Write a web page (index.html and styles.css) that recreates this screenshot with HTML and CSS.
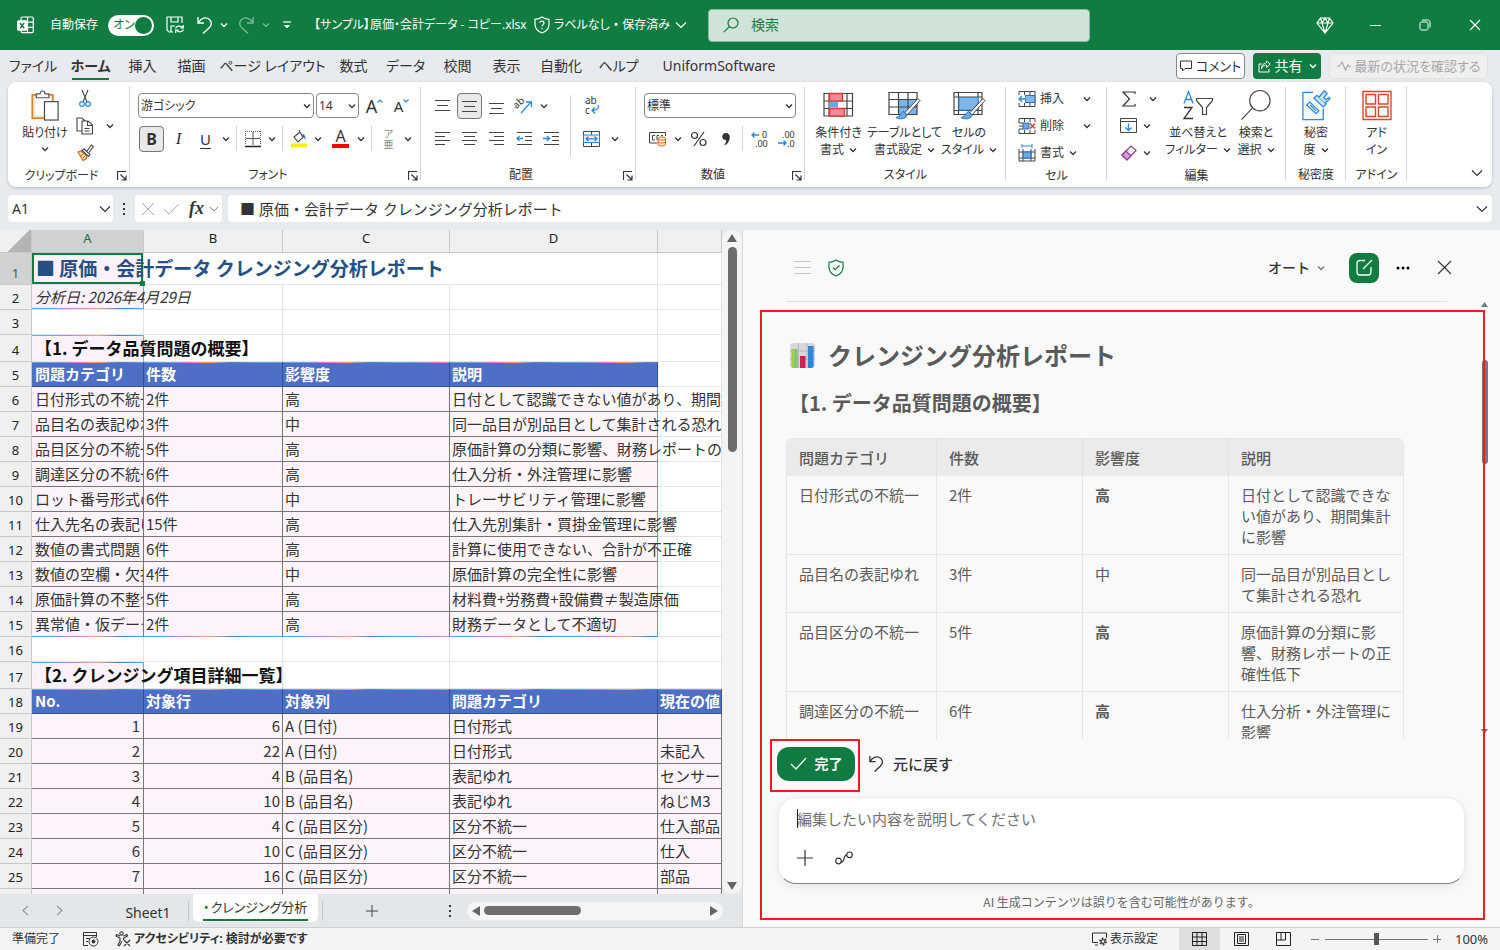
FILE: index.html
```html
<!DOCTYPE html>
<html lang="ja">
<head>
<meta charset="utf-8">
<title>原価・会計データ - Excel</title>
<link rel="stylesheet" href="styles.css">
</head>
<body>
<svg class="defs" aria-hidden="true">
  <symbol id="chev" viewBox="0 0 8 8"><path d="M1 2.500l3 3 3-3" fill="none" stroke="currentColor" stroke-width="1.300"/></symbol>
  <symbol id="chev-big" viewBox="0 0 12 8"><path d="M1 1.500l5 5 5-5" fill="none" stroke="currentColor" stroke-width="1.200"/></symbol>
  <symbol id="launch" viewBox="0 0 10 10"><path d="M.5 9V.5H9M3.500 3.500l5 5M9 4.500V9H4.500" fill="none" stroke="#333" stroke-width="1.200"/></symbol>
  <symbol id="undo" viewBox="0 0 16 18"><path d="M1 1v6h6M1.500 6.500C4 2 9 .5 12.500 3.500c3 3 2 6-.5 8.500L6 17.500" fill="none" stroke="currentColor" stroke-width="1.400"/></symbol>
</svg>

<header class="titlebar">
  <div class="title-left">
    <svg class="app-icon" width="17" height="18" viewBox="0 0 17 18" fill="none" stroke="#fff" stroke-width="1.200"><path d="M4 4V2.500C4 1.500 4.500 1 5.500 1H15c.8 0 1.300.5 1.300 1.300v13c0 .8-.5 1.300-1.300 1.300H5.500C4.500 16.600 4 16 4 15M10.500 1v15.600M4 6.200h12M10 11.400h6"/><rect x=".6" y="4.800" width="9" height="9.400" rx="1" fill="#fff"/><path d="M3 7l4.200 5.200M7.200 7L3 12.200" stroke="#107c41" stroke-width="1.400"/></svg>
    <span class="autosave">自動保存</span>
    <button class="toggle" role="switch" aria-checked="true">オン<i></i></button>
    <button class="tb save" aria-label="保存"><svg width="19" height="18" viewBox="0 0 19 18" fill="none" stroke="#fff" stroke-width="1.200"><path d="M7 16H3L1 14V1h15v6M5 1v5h7V1M5 16v-6h4"/><path d="M9.500 12.500c.5-2.500 5-3.500 7.500-.8M17.300 9v3h-3M17.500 13.500c-.8 2.500-5 3.300-7.300.7M9.700 17v-3h3"/></svg></button>
    <button class="tb" aria-label="元に戻す"><svg width="16" height="18"><use href="#undo"/></svg></button>
    <button class="tb drop" aria-label="元に戻す履歴"><svg width="8" height="8"><use href="#chev"/></svg></button>
    <button class="tb redo dim" aria-label="やり直し"><svg class="flip" width="16" height="18"><use href="#undo"/></svg></button>
    <button class="tb drop dim" aria-label="やり直し履歴"><svg width="8" height="8"><use href="#chev"/></svg></button>
    <button class="tb custom" aria-label="カスタマイズ"><svg width="8" height="9" viewBox="0 0 8 9"><path d="M0 1h8" stroke="#fff" stroke-width="1.200"/><path d="M1.500 4.500L4 7l2.500-2.500z" fill="#fff" stroke="#fff"/></svg></button>
    <span class="filename">【サンプル】原価・会計データ - コピー.xlsx</span>
    <svg width="16" height="18" viewBox="0 0 16 18" fill="none" stroke="#fff" stroke-width="1.200"><path d="M8 1c2 1.500 4 2.200 7 2.300v5c0 4-2.500 7-7 8.700-4.500-1.700-7-4.700-7-8.700v-5C4 3.200 6 2.500 8 1z"/><path d="M5.800 6.800C6 4.500 10 4.500 10 7c0 1.500-2 1.700-2 3.500M8 12v1.300"/></svg>
    <span class="label">ラベルなし</span><span class="label">•</span><span class="label">保存済み</span>
    <svg width="12" height="8"><use href="#chev-big"/></svg>
  </div>
  <label class="search"><svg width="16" height="16" viewBox="0 0 16 16" fill="none" stroke="#1c7a45" stroke-width="1.200"><circle cx="10" cy="6" r="5"/><path d="M6.500 9.500L.8 15.200"/></svg><input type="search" placeholder="検索" aria-label="検索"></label>
  <div class="window-buttons">
    <button aria-label="プレミアム"><svg width="18" height="17" viewBox="0 0 18 17" fill="none" stroke="#fff" stroke-width="1.200"><path d="M4.500 1h9L17 6l-8 10L1 6zM1 6h16M6 6l3 10 3-10M4.500 1L6 6l3-5 3 5 1.500-5"/></svg></button>
    <button aria-label="最小化"><svg width="11" height="11"><path d="M0 5.500h11" stroke="#fff"/></svg></button>
    <button aria-label="元のサイズ"><svg width="12" height="12" viewBox="0 0 12 12" fill="none" stroke="#fff"><rect x="1" y="3" width="8" height="8" rx="1.500"/><path d="M3 1h5.500C10.500 1 11 2 11 3v5.500"/></svg></button>
    <button aria-label="閉じる"><svg width="12" height="12"><path d="M1 1l10 10M11 1L1 11" stroke="#fff" stroke-width="1.200"/></svg></button>
  </div>
</header>

<nav class="tabs">
  <button class="t60">ファイル</button><button class="t55 active"><b>ホーム</b></button><button class="t49">挿入</button><button class="t49">描画</button><button class="t114">ページ レイアウト</button><button class="t49">数式</button><button class="t55">データ</button><button class="t49">校閲</button><button class="t49">表示</button><button class="t60">自動化</button><button class="t55">ヘルプ</button><button class="t146">UniformSoftware</button>
  <div class="tab-actions">
    <button class="comment"><svg width="12" height="12" viewBox="0 0 12 12" fill="none" stroke="#333"><path d="M.5 1h11v7.500H5L2.500 11V8.500h-2z"/></svg>コメント</button>
    <button class="share"><svg width="13" height="13" viewBox="0 0 13 13" fill="none" stroke="#fff"><path d="M4 4H1v8h10V9M3.500 9c.5-3 2.500-4 5-4V7.500L12.300 4 8.500 1v2C6 3 3.500 5 3.500 9z"/></svg>共有<svg width="8" height="8"><use href="#chev"/></svg></button>
    <button class="catchup" disabled><svg width="14" height="10" viewBox="0 0 14 10" fill="none" stroke="#aaa" stroke-width="1.200"><path d="M0 5h2.500L5 1l3.500 8L11 4l1 1.500h2"/></svg>最新の状況を確認する</button>
  </div>
</nav>

<section class="ribbon">
  <div class="group g-clip">
    <div class="body">
      <button class="big paste"><svg width="30" height="32" viewBox="0 0 30 32" fill="none"><path d="M7 5H2v24h12M18 5h5v6" stroke="#d9822b" stroke-width="2"/><path d="M4 7v20h10M4 7h16" stroke="#fbe3c4" stroke-width="1.500"/><path d="M6 8V4h4c0-4 5-4 5 0h4v4z" fill="#fff" stroke="#555" stroke-width="1.200"/><rect x="14.500" y="12" width="14" height="19" fill="#fff" stroke="#444" stroke-width="1.200"/></svg>貼り付け<svg width="8" height="8"><use href="#chev"/></svg></button>
      <div class="stack">
        <div class="row"><button class="ib" aria-label="切り取り"><svg width="12" height="18" viewBox="0 0 12 18" fill="none"><path d="M3 0l5 12M9 0L4 12" stroke="#444" stroke-width="1.100"/><circle cx="3" cy="14" r="2.300" stroke="#2b88d8" stroke-width="1.200"/><circle cx="9" cy="14" r="2.300" stroke="#2b88d8" stroke-width="1.200"/></svg></button></div>
        <div class="row"><button class="ib" aria-label="コピー"><svg width="18" height="18" viewBox="0 0 18 18" fill="none" stroke="#444" stroke-width="1.100"><path d="M6 14H1V1h5l3 3M6 4h6l4.500 4v9H6zM11.500 4v4.500h5M8.500 11.500h5M8.500 14h5"/></svg></button><svg class="dd" width="8" height="8"><use href="#chev"/></svg></div>
        <div class="row"><button class="ib" aria-label="書式のコピー"><svg width="17" height="17" viewBox="0 0 17 17" fill="none"><path d="M1 8l3-1 6 5-1 3-3 1.500z" fill="#fbd9b5" stroke="#d9641c" stroke-width="1.200"/><path d="M4 12l2-2M6 14l2-2" stroke="#d9641c"/><path d="M5 6.500l2-1.500 6 5.500-1.500 2zM10 7l4.500-6 1.800 1.500L12 8.500" fill="#fff" stroke="#444" stroke-width="1.100"/></svg></button></div>
      </div>
    </div>
    <footer><span>クリップボード</span><svg class="launch" width="10" height="10"><use href="#launch"/></svg></footer>
  </div>

  <div class="group g-font">
    <div class="lines">
      <div class="row">
        <span class="pick font"><select aria-label="フォント"><option>游ゴシック</option></select><svg width="8" height="8"><use href="#chev"/></svg></span>
        <span class="pick size"><select aria-label="サイズ"><option>14</option></select><svg width="8" height="8"><use href="#chev"/></svg></span>
        <button class="ib a-up">A<svg width="6" height="4" viewBox="0 0 6 4"><path d="M.5 3.500L3 1l2.500 2.500" fill="none" stroke="#2b88d8" stroke-width="1.200"/></svg></button>
        <button class="ib a-down">A<svg width="6" height="4" viewBox="0 0 6 4"><path d="M.5.5L3 3 5.500.5" fill="none" stroke="#2b88d8" stroke-width="1.200"/></svg></button>
      </div>
      <div class="row">
        <button class="ib on"><b>B</b></button><button class="ib it">I</button><button class="ib"><u>U</u></button><svg class="dd" width="8" height="8"><use href="#chev"/></svg><i class="vr"></i>
        <button class="ib" aria-label="罫線"><svg width="16" height="16" viewBox="0 0 16 16" fill="none" stroke="#555"><path d="M.5 0v14M15.500 0v14M0 .5h16" stroke-dasharray="1 1"/><path d="M8 1v13M1 7.500h14"/><path d="M0 15.500h16" stroke="#222" stroke-width="1.500"/></svg></button><svg class="dd" width="8" height="8"><use href="#chev"/></svg><i class="vr"></i>
        <button class="ib" aria-label="塗りつぶし"><svg width="18" height="18" viewBox="0 0 18 18" fill="none"><path d="M4 7l6-5 3 5.500-5 4.500zM10 2L9 0" stroke="#444" stroke-width="1.100"/><path d="M12.500 4c2 .5 3 2 3 6-1-2-2-3-3-3z" fill="#2b6cb8"/><path d="M1 15.500h16" stroke="#f2f20c" stroke-width="4"/></svg></button><svg class="dd" width="8" height="8"><use href="#chev"/></svg>
        <button class="ib fc" aria-label="フォントの色">A<svg width="17" height="4"><path d="M0 2h17" stroke="#f00" stroke-width="4"/></svg></button><svg class="dd" width="8" height="8"><use href="#chev"/></svg><i class="vr"></i>
        <button class="ib ruby"><span>ア</span><span>亜</span></button><svg class="dd" width="8" height="8"><use href="#chev"/></svg>
      </div>
    </div>
    <footer><span>フォント</span><svg class="launch" width="10" height="10"><use href="#launch"/></svg></footer>
  </div>

  <div class="group g-align">
    <div class="body">
      <div class="lines">
        <div class="row">
          <button class="ib" aria-label="上揃え"><svg width="15" height="16"><path d="M0 2.500h15M2 7.500h11M0 12.500h15" stroke="#444"/></svg></button>
          <button class="ib on" aria-label="上下中央揃え"><svg width="15" height="16"><path d="M0 3.500h15M2 8.500h11M0 13.500h15" stroke="#444"/></svg></button>
          <button class="ib" aria-label="下揃え"><svg width="15" height="16"><path d="M0 5.500h15M2 10.500h11M0 15.500h15" stroke="#444"/></svg></button>
          <button class="ib" aria-label="方向"><svg width="18" height="18" viewBox="0 0 18 18"><text x="0" y="9" font-size="10" transform="rotate(-40 5 9)" fill="#333">ab</text><path d="M6 16L16 5M11 5h5.500v5" fill="none" stroke="#2b88d8" stroke-width="1.300"/></svg></button>
          <svg class="dd" width="8" height="8"><use href="#chev"/></svg>
        </div>
        <div class="row">
          <button class="ib" aria-label="左揃え"><svg width="15" height="16"><path d="M0 1.500h15M0 5.500h10M0 9.500h15M0 13.500h10" stroke="#444"/></svg></button>
          <button class="ib" aria-label="中央揃え"><svg width="15" height="16"><path d="M0 1.500h15M2 5.500h11M0 9.500h15M2 13.500h11" stroke="#444"/></svg></button>
          <button class="ib" aria-label="右揃え"><svg width="15" height="16"><path d="M0 1.500h15M5 5.500h10M0 9.500h15M5 13.500h10" stroke="#444"/></svg></button>
          <button class="ib" aria-label="インデントを減らす"><svg width="16" height="16" fill="none"><path d="M1 1.500h15M9 5.500h7M9 9.500h7M1 13.500h15" stroke="#444"/><path d="M7 7.500H1M3.500 5L1 7.500 3.500 10" stroke="#2b88d8" stroke-width="1.300"/></svg></button>
          <button class="ib" aria-label="インデントを増やす"><svg width="16" height="16" fill="none"><path d="M1 1.500h15M9 5.500h7M9 9.500h7M1 13.500h15" stroke="#444"/><path d="M0 7.500h6M4 5l2.500 2.500L4 10" stroke="#2b88d8" stroke-width="1.300"/></svg></button>
        </div>
      </div>
      <i class="vr tall"></i>
      <div class="lines">
        <div class="row"><button class="ib" aria-label="折り返し"><svg width="16" height="18" viewBox="0 0 16 18"><text x="1" y="7" font-size="10" fill="#333">ab</text><text x="1" y="17" font-size="10" fill="#333">c</text><path d="M14 8c1.500 3-.5 5.500-6 5.500M11 10.500l-3 3 3 3" fill="none" stroke="#2b88d8" stroke-width="1.300"/></svg></button></div>
        <div class="row"><button class="ib" aria-label="結合"><svg width="17" height="16" fill="none"><path d="M.5.500h16v15H.5zM8.500.5v4M8.500 11.500v4" stroke="#444"/><path d="M.5 4h16v7.500H.5z" fill="#e3f0fb" stroke="#2b88d8"/><path d="M3 7.800h11M5.500 5.500L3 7.800l2.500 2.200M11.500 5.500L14 7.800 11.500 10" stroke="#2b88d8" stroke-width="1.200"/></svg></button><svg class="dd" width="8" height="8"><use href="#chev"/></svg></div>
      </div>
    </div>
    <footer><span>配置</span><svg class="launch" width="10" height="10"><use href="#launch"/></svg></footer>
  </div>

  <div class="group g-num">
    <div class="lines">
      <div class="row"><span class="pick num"><select aria-label="表示形式"><option>標準</option></select><svg width="8" height="8"><use href="#chev"/></svg></span></div>
      <div class="row">
        <button class="ib" aria-label="通貨"><svg width="18" height="16" viewBox="0 0 18 16" fill="none"><path d="M8 12H.5V1.500h16V5M6 4.500H3.500v4.500H6M10 4.500H8V9M12 4.500h2" stroke="#444"/><path d="M9 7.500c0-2 7.500-2 7.500 0v6c0 2-7.500 2-7.500 0zM9 7.500c0 2 7.500 2 7.500 0M9 10.500c0 2 7.500 2 7.500 0" fill="#fde3cc" stroke="#d9641c"/></svg></button><svg class="dd" width="8" height="8"><use href="#chev"/></svg>
        <button class="ib" aria-label="パーセント"><svg width="18" height="16" viewBox="0 0 18 16" fill="none" stroke="#333" stroke-width="1.200"><circle cx="4.500" cy="4.500" r="3"/><circle cx="13" cy="11.500" r="3"/><path d="M14 1L4 15"/></svg></button>
        <button class="ib" aria-label="桁区切り"><svg width="10" height="14" viewBox="0 0 10 14"><path d="M5 1c5 0 5 7 .5 11.500L3 13c2-2 2.500-3.500 2-5C0 8 0 1 5 1z" fill="#333"/></svg></button><i class="vr"></i>
        <button class="ib" aria-label="小数点以下を増やす"><svg width="18" height="18" viewBox="0 0 18 18"><text x="11" y="8" font-size="9" fill="#333">0</text><text x="4" y="17" font-size="9" fill="#333">.00</text><path d="M8 5H1M3.500 2.500L1 5l2.500 2.500" fill="none" stroke="#2b88d8" stroke-width="1.300"/></svg></button>
        <button class="ib" aria-label="小数点以下を減らす"><svg width="18" height="18" viewBox="0 0 18 18"><text x="4" y="8" font-size="9" fill="#333">.00</text><text x="9" y="17" font-size="9" fill="#333">.0</text><path d="M0 13h8M5.500 10.500L8 13l-2.500 2.500" fill="none" stroke="#2b88d8" stroke-width="1.300"/></svg></button>
      </div>
    </div>
    <footer><span>数値</span><svg class="launch" width="10" height="10"><use href="#launch"/></svg></footer>
  </div>

  <div class="group g-style">
    <div class="body">
      <button class="big"><svg width="31" height="28" viewBox="0 0 31 28" fill="none"><path d="M1 2h28.500v22.500H1zM1 9.500h28.500M1 17h28.500M6 2v22.500M24 2v22.500" stroke="#444" stroke-width="1.200"/><path d="M6.500 2h13v7.500h-13zM6.500 17h15v7.500h-15z" fill="#f4899a" stroke="#e23b3b" stroke-width="1.400"/><path d="M6.500 10.200h8.500v6H6.500z" fill="#69a9e6"/></svg>条件付き<span>書式<svg width="8" height="8"><use href="#chev"/></svg></span></button>
      <button class="big"><svg width="33" height="30" viewBox="0 0 33 30" fill="none"><path d="M11 9h18v15H11z" fill="#7db6ea"/><path d="M1 2h28v22H1zM1 9h28M1 16.500h28M10.500 2v22M20 2v22" stroke="#444" stroke-width="1.200"/><path d="M30 8L17 22l2 2.500L32 10z" fill="#fff" stroke="#444"/><path d="M16 21c-4 1-3 5-8 6 4 2 9 2 11-2z" fill="#69a9e6" stroke="#2b6cb8"/></svg>テーブルとして<span>書式設定<svg width="8" height="8"><use href="#chev"/></svg></span></button>
      <button class="big"><svg width="33" height="30" viewBox="0 0 33 30" fill="none"><path d="M1 2h28v22H1zM1 6.500h28M1 20h28M5.500 2v22M25 2v22" stroke="#444" stroke-width="1.200"/><path d="M6 7h19v12.500H6z" fill="#7db6ea" stroke="#2b88d8"/><path d="M30 8L17 22l2 2.500L32 10z" fill="#fff" stroke="#444"/><path d="M16 21c-4 1-3 5-8 6 4 2 9 2 11-2z" fill="#69a9e6" stroke="#2b6cb8"/></svg>セルの<span>スタイル<svg width="8" height="8"><use href="#chev"/></svg></span></button>
    </div>
    <footer><span>スタイル</span></footer>
  </div>

  <div class="group g-cell">
    <div class="stack">
      <button class="line"><svg width="18" height="16" viewBox="0 0 18 16" fill="none"><path d="M1 .5h16v15H1zM1 5h16M1 11h16M6.500.5v15M12 .5v15" stroke="#444"/><path d="M7 4.500h10v7H7z" fill="#7db6ea" stroke="#2b6cb8"/><path d="M0 4h7v8H0z" fill="#fff"/><path d="M8 8H1M4 5L1 8l3 3" stroke="#2b88d8" stroke-width="1.300"/></svg><span>挿入</span><svg width="8" height="8"><use href="#chev"/></svg></button>
      <button class="line"><svg width="18" height="16" viewBox="0 0 18 16" fill="none"><path d="M17 4V.5H1V5h4M17 12v3.500H1V11h4M6.500.5V4M12 .5V4M6.500 12v3.500M12 12v3.500M1 8h4" stroke="#444"/><path d="M5 5h6v6H5z" fill="#69a9e6" stroke="#2b6cb8"/><path d="M12 5.500l5 5M17 5.500l-5 5" stroke="#e23b20" stroke-width="1.500"/></svg><span>削除</span><svg width="8" height="8"><use href="#chev"/></svg></button>
      <button class="line fmt"><svg width="18" height="18" viewBox="0 0 18 18" fill="none"><path d="M4 2h10M4 0v4M14 0v4" stroke="#2b88d8"/><path d="M1 5v12h16V5M1 8h16M1 14h16M5 5v12M13 5v12" stroke="#444"/><path d="M5 8h8v6H5z" fill="#69a9e6" stroke="#2b6cb8"/></svg><span>書式</span><svg width="8" height="8"><use href="#chev"/></svg></button>
    </div>
    <footer><span>セル</span></footer>
  </div>

  <div class="group g-edit">
    <div class="body">
      <div class="stack">
        <div class="row"><button class="ib" aria-label="合計"><svg width="14" height="16" viewBox="0 0 14 16" fill="none" stroke="#333" stroke-width="1.200"><path d="M13 3V1H1l6.500 7L1 15h12v-2"/></svg></button><svg class="dd far" width="8" height="8"><use href="#chev"/></svg></div>
        <div class="row"><button class="ib" aria-label="フィル"><svg width="17" height="15" viewBox="0 0 17 15" fill="none"><path d="M.5.500h16v14H.5zM.5 3.500h16" stroke="#444"/><path d="M8.500 5.500V12M5.500 9.500l3 3 3-3" stroke="#2b88d8" stroke-width="1.300"/></svg></button><svg class="dd" width="8" height="8"><use href="#chev"/></svg></div>
        <div class="row"><button class="ib" aria-label="クリア"><svg width="16" height="16" viewBox="0 0 16 16" fill="none" stroke="#8a3b98" stroke-width="1.200"><path d="M1 10l9-9 5 4.500-9 9.500z" fill="#fff"/><path d="M1 10l4-4 5 4.800-4 4.200z" fill="#d59bdc"/></svg></button><svg class="dd" width="8" height="8"><use href="#chev"/></svg></div>
      </div>
      <button class="big sort"><svg width="32" height="30" viewBox="0 0 32 30" fill="none"><path d="M2 13L6.500 1 11 13M3.500 9h6" stroke="#2b88d8" stroke-width="1.300"/><path d="M2 17h8L2 28h9" stroke="#333" stroke-width="1.300"/><path d="M14.500 8h16v2l-6 7v7h-4v-7l-6-7z" stroke="#444" stroke-width="1.200"/></svg>並べ替えと<span>フィルター<svg width="8" height="8"><use href="#chev"/></svg></span></button>
      <button class="big"><svg width="32" height="32" viewBox="0 0 32 32" fill="none" stroke="#444" stroke-width="1.200"><circle cx="20" cy="11" r="10.500"/><path d="M12.500 18.500L1 30.500"/></svg>検索と<span>選択<svg width="8" height="8"><use href="#chev"/></svg></span></button>
    </div>
    <footer><span>編集</span></footer>
  </div>

  <div class="group g-sens">
    <div class="body"><button class="big"><svg width="30" height="32" viewBox="0 0 30 32" fill="none" stroke="#2b88d8" stroke-width="1.300"><path d="M12 2.500H1.500v28h21V19" fill="#f7fafd"/><path d="M5.500 15.500l3-3 9.500 9-3 3zM9 15.500l6 6"/><path d="M13 8.500l3-3 9.500 9-3 3z" fill="#cfe5f8"/><path d="M18 7.500l5.500-6.500 3 2.500-3.500 4.500 2 2 3.500-2.500 1 1.500-5 4.500" fill="#cfe5f8"/></svg>秘密<span>度<svg width="8" height="8"><use href="#chev"/></svg></span></button></div>
    <footer><span>秘密度</span></footer>
  </div>
  <div class="group g-addin">
    <div class="body"><button class="big"><svg width="30" height="30" viewBox="0 0 30 30" fill="none" stroke="#e0442a" stroke-width="1.400"><path d="M1 1h28v28H1zM4 4h9.500v9.500H4zM16.500 4H26v9.500h-9.500zM4 16.500h9.500V26H4zM16.500 16.500H26V26h-9.500z"/></svg>アド<span>イン</span></button></div>
    <footer><span>アドイン</span></footer>
  </div>
  <button class="collapse" aria-label="リボンを折りたたむ"><svg width="12" height="8"><use href="#chev-big"/></svg></button>
</section>

<section class="formula-bar">
  <div class="namebox"><input value="A1" aria-label="名前ボックス"><svg width="12" height="8"><use href="#chev-big"/></svg></div>
  <svg class="dots" width="4" height="14"><path d="M2 1v2M2 6v2M2 11v2" stroke="#333" stroke-width="2"/></svg>
  <div class="fxbox">
    <svg width="14" height="14"><path d="M1 1l12 12M13 1L1 13" stroke="#aaa"/></svg>
    <svg width="17" height="12"><path d="M1 6l5 5L16 1" fill="none" stroke="#aaa"/></svg>
    <button>fx</button>
    <svg class="grey" width="10" height="8" viewBox="0 0 12 8"><use href="#chev-big"/></svg>
  </div>
  <div class="formula"><input value="■ 原価・会計データ クレンジング分析レポート" aria-label="数式バー"><svg width="12" height="8"><use href="#chev-big"/></svg></div>
</section>

<main>
  <section class="book">
    <div class="grid-area">
      <div class="sheet">
        <table>
          <colgroup><col class="c0"><col class="ca"><col class="cb"><col class="cc"><col class="cd"><col></colgroup>
          <thead><tr><th class="corner"></th><th class="sel">A</th><th>B</th><th>C</th><th>D</th><th></th></tr></thead>
          <tbody>
          <tr class="title"><th class="sel">1</th><td class="ai cursor">■ 原価・会計データ クレンジング分析レポート</td><td class="open"></td><td class="open"></td><td></td><td></td></tr>
          <tr class="date"><th>2</th><td class="ai glow-b">分析日: 2026年4月29日</td><td></td><td></td><td></td><td></td></tr>
          <tr><th>3</th><td></td><td></td><td></td><td></td><td></td></tr>
          <tr class="section"><th>4</th><td class="ai glow-t">【1. データ品質問題の概要】</td><td></td><td></td><td></td><td></td></tr>
          <tr class="head"><th>5</th><td>問題カテゴリ</td><td>件数</td><td>影響度</td><td>説明</td><td class="plain"></td></tr>
          <tr class="data"><th>6</th><td>日付形式の不統一</td><td>2件</td><td>高</td><td class="edge">日付として認識できない値があり、期間集計に影響</td><td class="plain"></td></tr>
          <tr class="data"><th>7</th><td>品目名の表記ゆれ</td><td>3件</td><td>中</td><td class="edge">同一品目が別品目として集計される恐れ</td><td class="plain"></td></tr>
          <tr class="data"><th>8</th><td>品目区分の不統一</td><td>5件</td><td>高</td><td class="edge">原価計算の分類に影響、財務レポートの正確性低下</td><td class="plain"></td></tr>
          <tr class="data"><th>9</th><td>調達区分の不統一</td><td>6件</td><td>高</td><td class="edge">仕入分析・外注管理に影響</td><td class="plain"></td></tr>
          <tr class="data"><th>10</th><td>ロット番号形式の不統一</td><td>6件</td><td>中</td><td class="edge">トレーサビリティ管理に影響</td><td class="plain"></td></tr>
          <tr class="data"><th>11</th><td>仕入先名の表記ゆれ</td><td>15件</td><td>高</td><td class="edge">仕入先別集計・買掛金管理に影響</td><td class="plain"></td></tr>
          <tr class="data"><th>12</th><td>数値の書式問題</td><td>6件</td><td>高</td><td class="edge">計算に使用できない、合計が不正確</td><td class="plain"></td></tr>
          <tr class="data"><th>13</th><td>数値の空欄・欠損</td><td>4件</td><td>中</td><td class="edge">原価計算の完全性に影響</td><td class="plain"></td></tr>
          <tr class="data"><th>14</th><td>原価計算の不整合</td><td>5件</td><td>高</td><td class="edge">材料費+労務費+設備費≠製造原価</td><td class="plain"></td></tr>
          <tr class="data last"><th>15</th><td>異常値・仮データ</td><td>2件</td><td>高</td><td class="edge">財務データとして不適切</td><td class="plain"></td></tr>
          <tr><th>16</th><td></td><td></td><td></td><td></td><td></td></tr>
          <tr class="section"><th>17</th><td class="ai glow-t">【2. クレンジング項目詳細一覧】</td><td></td><td></td><td></td><td></td></tr>
          <tr class="head"><th>18</th><td>No.</td><td>対象行</td><td>対象列</td><td>問題カテゴリ</td><td>現在の値</td></tr>
          <tr class="data"><th>19</th><td class="n">1</td><td class="n">6</td><td>A (日付)</td><td>日付形式</td><td></td></tr>
          <tr class="data"><th>20</th><td class="n">2</td><td class="n">22</td><td>A (日付)</td><td>日付形式</td><td>未記入</td></tr>
          <tr class="data"><th>21</th><td class="n">3</td><td class="n">4</td><td>B (品目名)</td><td>表記ゆれ</td><td>センサー</td></tr>
          <tr class="data"><th>22</th><td class="n">4</td><td class="n">10</td><td>B (品目名)</td><td>表記ゆれ</td><td>ねじM3</td></tr>
          <tr class="data"><th>23</th><td class="n">5</td><td class="n">4</td><td>C (品目区分)</td><td>区分不統一</td><td>仕入部品</td></tr>
          <tr class="data"><th>24</th><td class="n">6</td><td class="n">10</td><td>C (品目区分)</td><td>区分不統一</td><td>仕入</td></tr>
          <tr class="data"><th>25</th><td class="n">7</td><td class="n">16</td><td>C (品目区分)</td><td>区分不統一</td><td>部品</td></tr>
          <tr class="data"><th></th><td></td><td></td><td></td><td></td><td></td></tr>
          </tbody>
        </table>
      </div>
      <div class="vscroll"><svg width="10" height="8"><path d="M5 0l5 8H0z" fill="#666"/></svg><i></i><svg width="10" height="8"><path d="M0 0h10L5 8z" fill="#666"/></svg></div>
    </div>
    <div class="sheetbar">
      <button class="nav" aria-label="前"><svg width="7" height="11"><path d="M6 1L1 5.500 6 10" fill="none" stroke="#999" stroke-width="1.200"/></svg></button>
      <button class="nav" aria-label="次"><svg width="7" height="11"><path d="M1 1l5 4.500L1 10" fill="none" stroke="#999" stroke-width="1.200"/></svg></button>
      <button class="tab">Sheet1</button><i class="sep"></i>
      <button class="tab current"><span><em>•</em>クレンジング分析</span></button><i class="sep"></i>
      <button class="add" aria-label="新しいシート"><svg width="12" height="12"><path d="M6 0v12M0 6h12" stroke="#444"/></svg></button>
      <svg class="grip" width="4" height="14"><path d="M2 1v2M2 6v2M2 11v2" stroke="#333" stroke-width="2"/></svg>
      <div class="hscroll"><svg width="8" height="10"><path d="M8 0v10L0 5z" fill="#666"/></svg><i></i><svg width="8" height="10"><path d="M0 0v10l8-5z" fill="#666"/></svg></div>
    </div>
  </section>

  <aside class="panel">
    <div class="panel-head">
      <button aria-label="メニュー"><svg width="17" height="13"><path d="M0 .5h17M0 6.500h17M0 12.500h17" stroke="#c4c4c4"/></svg></button>
      <svg width="16" height="18" viewBox="0 0 16 18" fill="none" stroke="#107c41" stroke-width="1.200"><path d="M8 1c2 1.500 4 2.200 7 2.300v5c0 4-2.500 7-7 8.700-4.500-1.700-7-4.700-7-8.700v-5C4 3.200 6 2.500 8 1z"/><path d="M5 8.500l2.200 2.200L11.500 6.500"/></svg>
      <button class="mode">オート<svg width="8" height="8"><use href="#chev"/></svg></button>
      <button class="compose" aria-label="新しいチャット"><svg width="17" height="17" viewBox="0 0 17 17" fill="none" stroke="#fff" stroke-width="1.300"><path d="M9 1.500H4C2 1.500 1 2.500 1 4.500V13c0 2 1 3 3 3h8c2 0 3-1 3-3V8M7 10l9-9"/></svg></button>
      <button class="more" aria-label="その他"><svg width="14" height="4"><circle cx="2" cy="2" r="1.500"/><circle cx="7" cy="2" r="1.500"/><circle cx="12" cy="2" r="1.500"/></svg></button>
      <button class="close" aria-label="閉じる"><svg width="13" height="13"><path d="M0 0l13 13M13 0L0 13" stroke="#333" stroke-width="1.100"/></svg></button>
    </div>
    <div class="scroller">
      <article>
        <h2><svg width="27" height="27" viewBox="0 0 27 27"><rect x="1" y="1" width="25" height="25" rx="3" fill="#ddd5dd"/><path d="M9.500 1v25M18 1v25M1 9h25M1 17h25" stroke="#bdb3c2"/><path d="M2.500 7h6v19h-4c-1.500 0-2-1-2-2z" fill="#9fce4a"/><path d="M5.500 7h3v19h-3z" fill="#7cc67b"/><path d="M11 14h5.500v12H11z" fill="#d41f52"/><path d="M19 4h5.500v20c0 1-1 2-2 2H19z" fill="#2f86d6"/></svg>クレンジング分析レポート</h2>
        <h3>【1. データ品質問題の概要】</h3>
        <table class="report">
          <colgroup><col class="r1"><col class="r2"><col class="r2"><col></colgroup>
          <thead><tr><th>問題カテゴリ</th><th>件数</th><th>影響度</th><th>説明</th></tr></thead>
          <tbody>
          <tr><td>日付形式の不統一</td><td>2件</td><td><strong>高</strong></td><td>日付として認識できない値があり、期間集計に影響</td></tr>
          <tr><td>品目名の表記ゆれ</td><td>3件</td><td>中</td><td>同一品目が別品目として集計される恐れ</td></tr>
          <tr><td>品目区分の不統一</td><td>5件</td><td><strong>高</strong></td><td>原価計算の分類に影響、財務レポートの正確性低下</td></tr>
          <tr><td>調達区分の不統一</td><td>6件</td><td><strong>高</strong></td><td>仕入分析・外注管理に影響</td></tr>
          </tbody>
        </table>
      </article>
      <div class="pscroll"><svg width="7" height="5"><path d="M3.500 0L7 5H0z" fill="#777"/></svg><i></i><svg width="7" height="5"><path d="M0 0h7L3.500 5z" fill="#777"/></svg></div>
    </div>
    <div class="actions">
      <button class="done"><svg width="17" height="13"><path d="M1 7l5 5L16 1" fill="none" stroke="#fff" stroke-width="1.300"/></svg>完了</button>
      <button class="revert"><svg width="15" height="17" viewBox="0 0 16 18"><use href="#undo"/></svg>元に戻す</button>
    </div>
    <div class="composer">
      <textarea rows="1" placeholder="編集したい内容を説明してください" aria-label="編集内容"></textarea><i class="caret"></i>
      <div class="tools">
        <button aria-label="追加"><svg width="16" height="16"><path d="M8 0v16M0 8h16" stroke="#333" stroke-width="1.200"/></svg></button>
        <button aria-label="ツール"><svg width="18" height="14" viewBox="0 0 18 14" fill="none" stroke="#333" stroke-width="1.200"><circle cx="3.500" cy="10" r="2.800"/><circle cx="14.500" cy="3.800" r="2.800"/><path d="M6 11.500c4 0 2-7.500 5.800-8"/></svg></button>
      </div>
    </div>
    <p class="note">AI 生成コンテンツは誤りを含む可能性があります。</p>
    <i class="frame"></i>
  </aside>
</main>

<footer class="status">
  <span>準備完了</span>
  <svg class="macro" width="17" height="15" viewBox="0 0 17 15" fill="none" stroke="#333"><path d="M6 13.500H1.500V.5h13V5M1.500 3.500h13M4 6.500h4M4 9.500h2"/><circle cx="11.500" cy="9.500" r="4.500"/><circle cx="11.500" cy="9.500" r="1.500" fill="#333"/></svg>
  <svg class="acc" width="16" height="16" viewBox="0 0 16 16" fill="none" stroke="#333" stroke-width="1.100"><circle cx="6.500" cy="2.500" r="1.700"/><path d="M5 5L1.500 3.500 1 5l4 2v3l-2 4 1.500.8 2.500-4.500M8.500 5L12 3.500l.5 1.500L8.500 7v2M9 9l6 6M15 9l-6 6"/></svg>
  <b>アクセシビリティ: 検討が必要です</b>
  <div class="status-right">
    <button class="disp"><svg width="16" height="14" viewBox="0 0 16 14" fill="none" stroke="#333"><path d="M6 10.500H.5V1h14v5M3 13h3"/><circle cx="11" cy="9.500" r="2.700" stroke-width="2.400" stroke-dasharray="1.600 1.200"/><circle cx="11" cy="9.500" r="1.900"/></svg>表示設定</button>
    <button class="view on" aria-label="標準"><svg width="15" height="14" fill="none" stroke="#222"><path d="M.5.500h14v13H.5zM.5 5h14M.5 9.500h14M5 .5v13M10 .5v13"/></svg></button>
    <button class="view" aria-label="ページ レイアウト"><svg width="15" height="14" fill="none" stroke="#222"><path d="M.5.500h14v13H.5zM3.500 2.500h8v9h-8zM5 5h5M5 7h5M5 9h5"/></svg></button>
    <button class="view" aria-label="改ページ"><svg width="15" height="14" fill="none" stroke="#222"><path d="M.5.500h14v13H.5zM.5 8h9V.5M5 .5V8"/></svg></button>
    <button class="zb" aria-label="縮小"><svg width="8" height="8"><path d="M0 4.500h8" stroke="#777"/></svg></button>
    <input type="range" min="0" max="100" value="50" aria-label="ズーム">
    <button class="zb" aria-label="拡大"><svg width="8" height="8"><path d="M0 4.500h8M4.500 0v8" stroke="#777"/></svg></button>
    <span class="pct">100%</span>
  </div>
</footer>
</body>
</html>
```
FILE: styles.css
```css
*, *::before, *::after { box-sizing: border-box; }
html, body { height: 100%; margin: 0; }
body {
  display: flex; flex-direction: column; overflow: hidden;
  background: #e7eaef; color: #333;
  font: 12px/16px "Noto Sans", "Noto Sans CJK JP", sans-serif;
  font-feature-settings: "palt";
}
button, input, select, textarea { font: inherit; font-feature-settings: inherit; color: inherit; border: 0; padding: 0; margin: 0; background: none; outline: 0; }
button { display: inline-flex; align-items: center; justify-content: center; white-space: nowrap; }
svg { flex: none; display: block; overflow: visible; }
.defs { position: absolute; width: 0; height: 0; }
input { min-width: 0; }

/* title bar */
.titlebar { flex: none; height: 50px; display: flex; align-items: center; background: #107c41; color: #fff; }
.title-left { flex: 0 0 708px; display: flex; align-items: center; padding-left: 17px; white-space: nowrap; }
.autosave { margin-left: 16px; width: 58px; }
.toggle { position: relative; width: 46px; height: 21px; border-radius: 11px; background: #fff; color: #107c41; justify-content: flex-start; padding-left: 5px; margin-right: 9px; }
.toggle i { position: absolute; right: 2px; top: 2px; width: 17px; height: 17px; border-radius: 50%; background: #107c41; }
.tb { width: 24px; }
.tb.save { width: 30px; justify-content: flex-start; padding-left: 3px; }
.tb.save + .tb { width: 24px; }
.tb.drop { width: 14px; }
.tb.redo { width: 26px; margin-left: 2px; }
.tb.custom { width: 28px; margin-right: 13px; }
.dim { opacity: .45; }
.flip { transform: scaleX(-1); }
.filename { width: 220px; }
.label { margin-left: 4px; }
.label:last-of-type { margin-right: 5px; }
.search { flex: 0 1 382px; height: 33px; display: flex; align-items: center; gap: 12px; padding: 0 14px; background: #cfe3d8; border: 1px solid #8fb8a0; border-radius: 4px; color: #1c7a45; font-size: 14px; }
.search input { flex: 1; }
.search input::placeholder { color: #1c7a45; }
.window-buttons { margin-left: auto; display: flex; }
.window-buttons button { width: 50px; height: 50px; }

/* ribbon tabs */
.tabs { flex: none; height: 32px; display: flex; align-items: center; padding-left: 3px; font-size: 14px; }
.tabs > button { height: 26px; position: relative; }
.t49 { width: 49px; } .t55 { width: 55px; } .t60 { width: 60px; } .t114 { width: 113px; } .t146 { width: 146px; }
.tabs .active::after { content: ""; position: absolute; left: 9px; right: 9px; bottom: -1px; height: 2px; background: #107c41; }
.tab-actions { margin-left: auto; display: flex; gap: 8px; padding-right: 12px; }
.tab-actions button { height: 26px; border-radius: 4px; gap: 4px; padding: 0 5px; }
.tab-actions .comment { width: 69px; background: #fff; border: 1px solid #888; font-size: 13px; }
.share { width: 68px; background: #107c41; color: #fff; }
.share svg:last-child { margin-left: 2px; }
.tab-actions .catchup { width: 159px; border: 1px solid #e2e2e2; background: #efefef; color: #a8a8a8; font-size: 13px; }

/* ribbon */
.ribbon { flex: none; height: 105px; margin: 0 8px; display: flex; background: #fff; border-radius: 8px; box-shadow: 0 1px 3px #0003; }
.group { flex: none; position: relative; display: flex; flex-direction: column; padding-top: 3px; }
.group::after { content: ""; position: absolute; right: 0; top: 5px; bottom: 7px; width: 1px; background: #d5d5d5; }
.group > .body, .group > .lines, .group > .stack { flex: 1; }
.group footer { height: 22px; display: flex; align-items: center; justify-content: center; margin-bottom: 1px; }
.launch { position: absolute; right: 3px; bottom: 6px; }
.g-clip { width: 122px; } .g-font { width: 291px; } .g-align { width: 215px; } .g-num { width: 169px; }
.g-style { width: 201px; } .g-cell { width: 101px; } .g-edit { width: 179px; } .g-sens { width: 60px; } .g-addin { width: 61px; }
.g-clip footer, .g-align footer, .g-font footer, .g-num footer { padding-right: 15px; }
.body { display: flex; }
.row { display: flex; align-items: center; }
.lines { display: flex; flex-direction: column; gap: 6px; padding-top: 7px; }
.lines .row { height: 27px; }
.stack { display: flex; flex-direction: column; }
.stack .row { height: 27px; }
.ib { width: 27px; height: 26px; border-radius: 4px; }
.on.ib { width: 25px; background: #e9e9e9; border: 1px solid #777; margin: 0 1px; }
.dd { margin: 0 3px; }
.vr { width: 1px; height: 25px; background: #d5d5d5; margin: 0 3px; }
.vr.tall { height: 62px; margin: 10px 7px 0 6px; }
.big { flex-direction: column; justify-content: flex-start; line-height: 17px; padding-top: 5px; }
.big > svg:first-child { margin-bottom: 3px; height: 31px; }
.big span { display: flex; align-items: center; gap: 5px; }
.paste { width: 54px; margin-left: 10px; }
.paste svg:last-child { margin-top: 4px; }
.g-clip .stack .ib { width: 26px; }
.g-clip .dd { margin-left: 8px; }
.g-font .lines, .g-num .lines { padding-left: 8px; }
.pick { position: relative; height: 25px; display: inline-flex; align-items: center; border: 1px solid #888; border-radius: 4px; }
.pick select { appearance: none; width: 100%; height: 100%; padding-left: 2px; }
.pick svg { position: absolute; right: 2px; pointer-events: none; }
.pick.font { width: 176px; margin-right: 2px; } .pick.size { width: 43px; margin-right: 2px; } .pick.num { width: 152px; }
.a-up, .a-down { align-items: center; }
.a-up { font-size: 18px; } .a-down { font-size: 15px; }
.a-up svg, .a-down svg { margin-bottom: 10px; }
.ib b { font-size: 16px; }
.ib u { font-size: 15px; text-underline-offset: 3px; }
.it { font: italic 17px "Liberation Serif", serif; }
.g-font .row:last-child { font-size: 15px; }
.g-font .vr + .ib { width: 25px; }
.fc { flex-direction: column; line-height: 15px; font-size: 16px; margin-left: 2px; }
.ruby { flex-direction: column; font-size: 10px; line-height: 10px; color: #888; margin-left: 1px; }
.g-align .lines:first-child { padding-left: 8px; }
.g-align .lines:last-child .dd { margin-left: 6px; }
.g-style .body { padding-left: 1px; }
.g-style .big { width: 65px; }
.g-style .big:nth-child(2) { width: 67px; }
.g-style .big:nth-child(3) { width: 62px; }
.g-cell .stack { padding-left: 12px; }
.line { height: 27px; justify-content: flex-start; gap: 4px; }
.line span { width: 39px; text-align: left; }
.line.fmt span { width: 25px; }
.g-edit .stack { padding-left: 8px; width: 60px; }
.g-edit .dd { margin-left: 1px; }
.g-edit .dd.far { margin-left: 7px; }
.big.sort { width: 62px; }
.g-edit .big:last-child { width: 54px; }
.g-sens .body, .g-addin .body { justify-content: center; }
.collapse { margin: auto 9px 10px auto; }

/* formula bar */
.formula-bar { flex: none; height: 27px; margin: 8px 8px; display: flex; align-items: center; font-size: 14px; }
.formula-bar > div { height: 27px; background: #fff; border-radius: 4px; display: flex; align-items: center; }
.namebox { width: 105px; padding: 0 2px 0 4px; }
.namebox input, .formula input { flex: 1; }
.dots { margin: 0 9px; }
.fxbox { width: 87px; gap: 8px; padding-left: 6px; margin-right: 6px; }
.fxbox button { font: italic bold 18px "Liberation Serif", serif; margin-left: 1px; }
.fxbox .grey { color: #888; margin-left: -3px; }
.formula { flex: 1; padding: 0 4px 0 12px; font-size: 15px; font-feature-settings: normal; }

/* workbook */
main { flex: 1; min-height: 0; display: flex; border-bottom: 1px solid #d0d0d0; }
.book { flex: 1; min-width: 0; display: flex; flex-direction: column; font-feature-settings: normal; }
.grid-area { flex: 1; min-height: 0; display: flex; }
.sheet { flex: 1; min-width: 0; overflow: hidden; background: #fff; }
.sheet table { width: 100%; table-layout: fixed; border-spacing: 0; font: 15px/23px "Noto Sans CJK JP", sans-serif; }
.c0 { width: 32px; } .ca { width: 112px; } .cb { width: 139px; } .cc { width: 167px; } .cd { width: 208px; }
.sheet th { padding: 0; background: #f0f0f0; border: 0 solid #c8c8c8; border-width: 0 1px 1px 0; font: 13px/22px "Noto Sans", sans-serif; text-align: center; height: 24px; color: #222; }
.sheet thead th { line-height: 16px; height: 23px; vertical-align: top; }
.sheet tbody th { height: 25px; vertical-align: bottom; }
.sheet th.sel { background: #d2d2d2; color: #1c6b41; }
.sheet th.corner { background: linear-gradient(135deg, #f0f0f0 55%, #b4b4b4 55%); }
.sheet td { padding: 0 2px; height: 25px; border: 0 solid #e4e4e4; border-width: 0 1px 1px 0; white-space: nowrap; vertical-align: top; }
.sheet td:nth-child(2) { padding: 0 3px; }
.sheet .ai { background-color: #fdf2fb; }
.sheet .title td { height: 32px; font-size: 19px; line-height: 30px; font-weight: 700; color: #264f84; }
.sheet .title td:nth-child(2) { padding-left: 4px; }
.title .open { border-right-color: transparent; }
.cursor { position: relative; box-shadow: inset 0 0 0 2px #107c41; }
.cursor::after { content: ""; position: absolute; right: -2px; bottom: -2px; width: 5px; height: 5px; background: #107c41; }
.date td { font-style: italic; }
.sheet .section td { height: 27px; line-height: 26px; font-size: 17px; font-weight: 700; color: #111; }
.glow-t, .head td:not(.plain), .last td:not(.plain), .glow-b {
  background-image: repeating-linear-gradient(90deg, #58a8ee 0 20px, #c77be8 38px, #f0a878 66px, #4a7fd0 88px, #58a8ee 111px);
  background-size: 100% 1px; background-repeat: no-repeat;
}
.last td:not(.plain), .glow-b { background-position: bottom; }
.sheet .glow-t, .sheet .glow-b { border-right-color: #7aa5ea; }
.head td:not(.plain) { background-color: #4d70c6; color: #fff; font-weight: 700; border-color: #35508f; }
.data td:not(.plain) { background-color: #fdf3fb; border-color: #777; overflow: hidden; }
.data td.edge { overflow: visible; border-right-color: #5b9be4; background-color: #fdf5f7; }
.last td:not(.plain) { border-bottom-width: 0; }
.n { text-align: right; }
.vscroll { flex: none; width: 20px; background: #f4f4f4; border-radius: 10px; display: flex; flex-direction: column; align-items: center; padding: 4px 0; }
.vscroll i { width: 9px; height: 205px; border-radius: 5px; background: #6d6d6d; margin: 5px 0 auto; }
.sheetbar { flex: none; height: 33px; display: flex; align-items: center; background: #e4e7ea; padding-right: 19px; }
.nav { width: 34px; height: 33px; }
.nav:first-child { margin-left: 8px; }
.tab { font-size: 14px; height: 28px; }
.sheetbar > .tab:not(.current) { width: 112px; padding-top: 4px; padding-left: 32px; }
.sheetbar > .tab.current { width: 125px; background: #fff; border-radius: 0 0 6px 6px; align-self: flex-start; margin: 0 4px; font-feature-settings: "palt"; font-size: 13px; }
.current span { border-bottom: 2px solid #107c41; line-height: 24px; padding: 0 1px; }
.current em { color: #107c41; font-style: normal; margin-right: 2px; }
.sep { width: 1px; height: 20px; background: #c4c8cc; }
.add { margin-left: 43px; }
.grip { margin-left: auto; margin-right: 15px; }
.hscroll { flex: 0 0 256px; height: 18px; border-radius: 9px; background: #f6f6f6; display: flex; align-items: center; padding: 0 5px; }
.hscroll i { width: 97px; height: 9px; border-radius: 5px; background: #6d6d6d; margin: 0 auto 0 4px; }

/* assistant panel */
.panel { flex: 0 0 758px; position: relative; display: flex; flex-direction: column; background: #f9f9f9; border-left: 1px solid #d6d9dc; font: 15px/21px "Noto Sans CJK JP", sans-serif; font-feature-settings: normal; color: #5a5a5a; }
.panel-head { flex: none; height: 72px; margin: 0 53px 0 43px; border-bottom: 1px solid #e0e0e0; display: flex; align-items: center; padding: 4px 0 0 8px; }
.panel-head > svg { margin-left: 17px; }
.mode { margin-left: auto; gap: 7px; color: #333; font-size: 14px; font-weight: 500; }
.mode svg { color: #777; }
.compose { width: 30px; height: 30px; border-radius: 8px; background: #107c41; margin: 0 17px 0 24px; }
.close { margin-left: 28px; margin-right: -4px; }
.scroller { flex: 1; min-height: 0; display: flex; overflow: hidden; justify-content: space-between; }
article { width: 618px; margin-left: 43px; overflow: hidden; }
h2 { display: flex; align-items: center; gap: 12px; margin: 35px 3px 0; font-size: 24px; line-height: 36px; font-weight: 700; }
h3 { margin: 15px 3px 20px; font-size: 20px; line-height: 30px; font-weight: 700; }
.report { width: 100%; table-layout: fixed; border-spacing: 0; border: 1px solid #e6e6e6; border-radius: 6px; overflow: hidden; }
.r1 { width: 150px; } .r2 { width: 146px; }
.report th { height: 37px; padding: 0 12px; text-align: left; background: #ebebeb; font-weight: 500; border-right: 1px solid #e2e2e2; }
.report td { padding: 8px 11px 7px 12px; vertical-align: top; border-right: 1px solid #e6e6e6; border-bottom: 1px solid #e6e6e6; line-height: 21px; }
.report th:last-child, .report td:last-child { border-right: 0; }
.report strong { font-weight: 700; }
.pscroll { width: 7px; margin-right: 12px; display: flex; flex-direction: column; align-items: center; padding-bottom: 5px; }
.pscroll i { width: 6px; height: 104px; border-radius: 3px; background: #777; margin: 53px 0 auto; }
.actions { flex: none; position: relative; display: flex; align-items: center; height: 52px; padding: 0 34px; color: #333; }
.actions::before { content: ""; position: absolute; left: 27px; top: 0; width: 90px; height: 53px; border: 2px solid #ee1c25; }
.done { width: 78px; height: 34px; border-radius: 12px; background: #107c41; color: #fff; gap: 8px; font-weight: 700; font-size: 14px; margin-bottom: 3px; }
.revert { margin-left: 14px; gap: 9px; font-weight: 500; font-size: 15px; margin-bottom: 3px; }
.composer { flex: none; position: relative; margin: 6px 35px 0; height: 87px; background: #fff; border: 1px solid #ececec; border-bottom-color: #888; border-radius: 18px; box-shadow: 0 3px 8px #0001; padding: 10px 18px; }
.composer textarea { width: 100%; height: 22px; resize: none; display: block; }
.composer textarea::placeholder { color: #707070; }
.caret { position: absolute; left: 18px; top: 11px; width: 1px; height: 19px; background: #222; }
.tools { display: flex; align-items: center; gap: 22px; margin-top: 20px; }
.note { margin: 0; height: 43px; line-height: 36px; text-align: center; font-size: 12px; color: #666; }
.frame { position: absolute; left: 17px; right: 15px; top: 80px; bottom: 7px; border: 2px solid #ee1c25; pointer-events: none; }

/* status bar */
.status { flex: none; height: 22px; display: flex; align-items: center; background: #f4f4f4; padding-left: 12px; white-space: nowrap; }
.macro { margin-left: 22px; margin-right: 16px; }
.acc { margin-right: 3px; }
.status-right { margin-left: auto; display: flex; align-items: center; height: 100%; padding-right: 8px; }
.disp { gap: 2px; margin-right: 21px; }
.view { width: 42px; height: 22px; }
.view.on { background: #dedede; width: 41px; }
.zb { width: 12px; margin-left: 5px; }
.zb + input + .zb { margin: 0 12px 0 3px; }
input[type=range] { appearance: none; width: 103px; height: 14px; margin-left: 4px; background: linear-gradient(#777, #777) center / 100% 1px no-repeat; }
input[type=range]::-webkit-slider-thumb { appearance: none; width: 5px; height: 12px; background: #555; }
.pct { width: 37px; font-size: 13px; }
```
